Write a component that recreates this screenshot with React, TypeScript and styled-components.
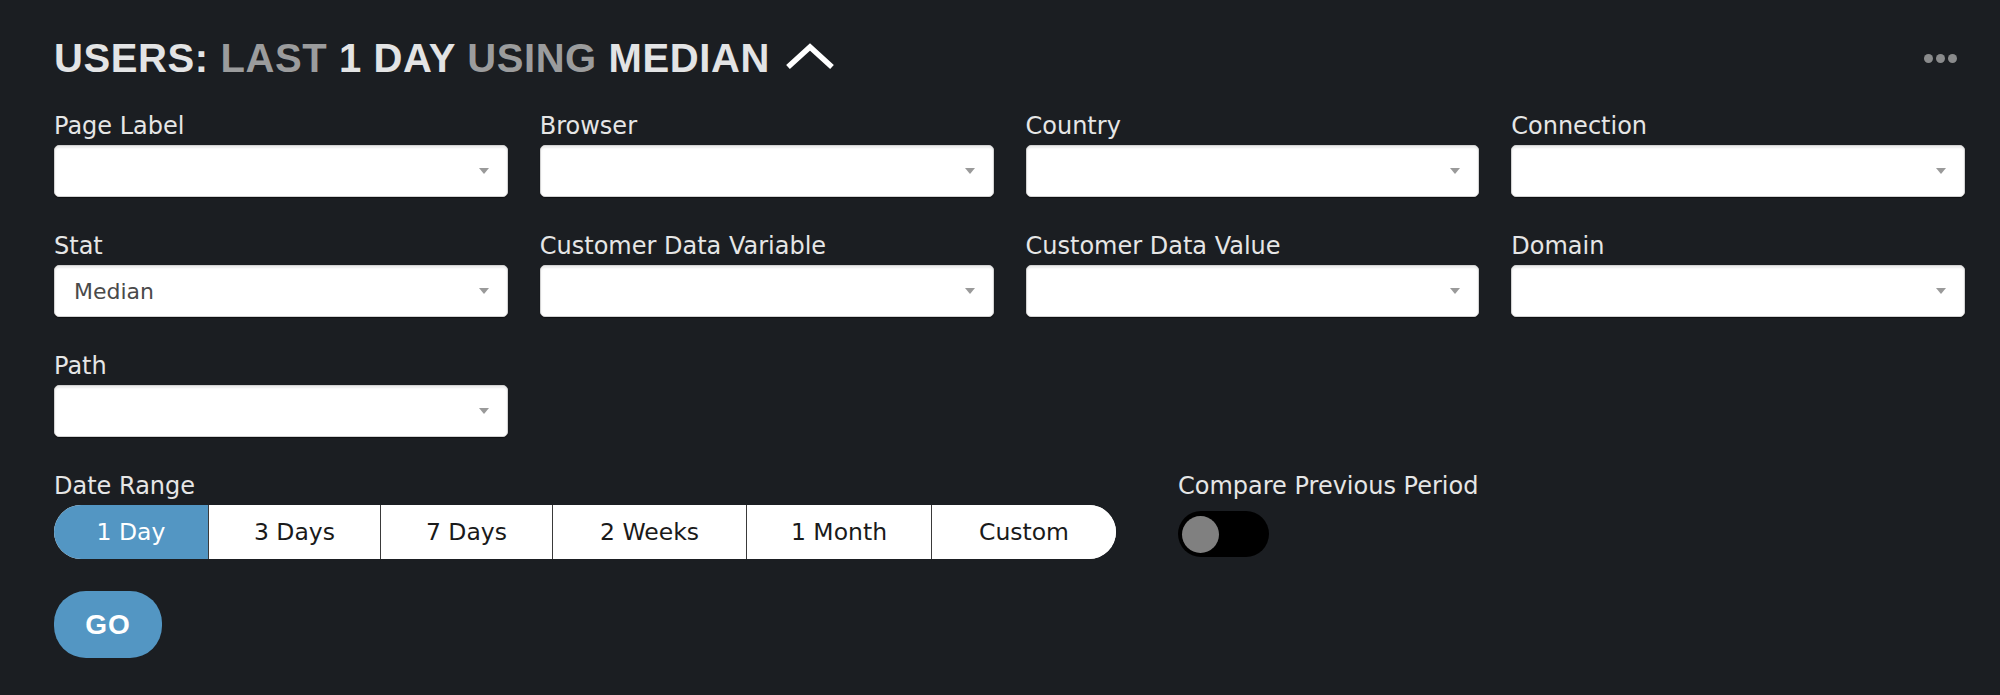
import styled, { createGlobalStyle } from "styled-components";

const GlobalStyle = createGlobalStyle`
  html, body {
    margin: 0;
    padding: 0;
    background: #1b1e22;
  }

  body {
    font-family: "DejaVu Sans", "Liberation Sans", sans-serif;
    color: #e6e6e6;
  }
`;

const StyledPanel = styled.section`
  min-height: 695px;
  box-sizing: border-box;
  padding: 34px 35px 0 54px;
`;

const Header = styled.header`
  display: flex;
  align-items: center;
  justify-content: space-between;
  height: 48px;
  padding-right: 8px;
  margin-bottom: 31px;
`;

const Title = styled.h1`
  display: flex;
  align-items: center;
  gap: 14px;
  margin: 0;
  font-family: "Liberation Sans", Arial, sans-serif;
  font-weight: 700;
  font-size: 40px;
  line-height: 48px;
  letter-spacing: 0.6px;
  color: #e3e4e5;
`;

const Muted = styled.span`
  color: #9b9c9d;
`;

const Chevron = styled.svg`
  width: 52px;
  height: 28px;
  margin-top: -4px;
`;

const MoreButton = styled.button`
  display: flex;
  gap: 3px;
  padding: 0;
  border: 0;
  background: none;
  cursor: pointer;

  span {
    width: 9px;
    height: 9px;
    border-radius: 50%;
    background: #8a8b8c;
  }
`;

const FilterGrid = styled.div`
  display: grid;
  grid-template-columns: repeat(4, 1fr);
  column-gap: 32px;
  row-gap: 36px;
`;

const Field = styled.div`
  display: flex;
  flex-direction: column;
`;

const Label = styled.label`
  font-size: 24px;
  line-height: 27px;
  height: 27px;
  margin-bottom: 5px;
  color: #e6e6e6;
  white-space: nowrap;
`;

const SelectBox = styled.div`
  position: relative;
  display: flex;
  align-items: center;
  box-sizing: border-box;
  height: 52px;
  padding: 0 40px 0 19px;
  background: #fff;
  border: 1px solid #d2d2d2;
  border-radius: 5px;
  box-shadow: inset 0 2px 2px rgba(0, 0, 0, 0.08), 0 1px 1px rgba(0, 0, 0, 0.5);
  font-size: 22px;
  color: #4a4a4a;

  &::after {
    content: "";
    position: absolute;
    right: 18px;
    top: 50%;
    margin-top: -3px;
    border-left: 5.5px solid transparent;
    border-right: 5.5px solid transparent;
    border-top: 6px solid #9a9a9a;
  }
`;

const DateRow = styled.div`
  display: flex;
  gap: 62px;
  margin-top: 36px;
`;

const Segmented = styled.div`
  display: flex;
  height: 54px;
  border-radius: 27px;
  overflow: hidden;
  background: #fff;
`;

const Segment = styled.button<{ $active?: boolean; $width: number }>`
  width: ${(p) => p.$width}px;
  padding: 0;
  border: 0;
  border-left: 1px solid #3a3a3a;
  background: ${(p) => (p.$active ? "#5396c3" : "#fff")};
  color: ${(p) => (p.$active ? "#fff" : "#1a1a1a")};
  font-family: "DejaVu Sans", sans-serif;
  font-size: 23.5px;
  white-space: nowrap;
  cursor: pointer;

  &:first-child {
    border-left: 0;
  }
`;

const Toggle = styled.div<{ $on?: boolean }>`
  display: flex;
  align-items: center;
  width: 91px;
  height: 46px;
  margin-top: 6px;
  padding: 0 4px;
  box-sizing: border-box;
  border-radius: 23px;
  background: #000;
  justify-content: ${(p) => (p.$on ? "flex-end" : "flex-start")};

  span {
    width: 37px;
    height: 37px;
    border-radius: 50%;
    background: #808080;
  }
`;

const GoButton = styled.button`
  margin-top: 32px;
  width: 108px;
  height: 67px;
  border: 0;
  border-radius: 32px;
  background: #5396c3;
  color: #fff;
  font-family: "Liberation Sans", Arial, sans-serif;
  font-weight: 700;
  font-size: 28px;
  letter-spacing: 1px;
  cursor: pointer;
`;

const filters = [
  { label: "Page Label" },
  { label: "Browser" },
  { label: "Country" },
  { label: "Connection" },
  { label: "Stat", value: "Median" },
  { label: "Customer Data Variable" },
  { label: "Customer Data Value" },
  { label: "Domain" },
  { label: "Path" },
];

const ranges = [
  { label: "1 Day", width: 154 },
  { label: "3 Days", width: 172 },
  { label: "7 Days", width: 172 },
  { label: "2 Weeks", width: 194 },
  { label: "1 Month", width: 185 },
  { label: "Custom", width: 185 },
];

const App = () => {
  return (
    <>
      <GlobalStyle />
      <StyledPanel>
        <Header>
          <Title>
            <span>
              USERS: <Muted>LAST</Muted> 1 DAY <Muted>USING</Muted> MEDIAN
            </span>
            <Chevron viewBox="0 0 52 28">
              <polyline
                points="4,25 26,5 48,25"
                fill="none"
                stroke="#fff"
                strokeWidth="5.5"
              />
            </Chevron>
          </Title>
          <MoreButton aria-label="more">
            <span />
            <span />
            <span />
          </MoreButton>
        </Header>

        <FilterGrid>
          {filters.map((f) => (
            <Field key={f.label}>
              <Label>{f.label}</Label>
              <SelectBox>{f.value}</SelectBox>
            </Field>
          ))}
        </FilterGrid>

        <DateRow>
          <Field>
            <Label>Date Range</Label>
            <Segmented>
              {ranges.map((r, i) => (
                <Segment key={r.label} $active={i === 0} $width={r.width}>
                  {r.label}
                </Segment>
              ))}
            </Segmented>
          </Field>
          <Field>
            <Label>Compare Previous Period</Label>
            <Toggle>
              <span />
            </Toggle>
          </Field>
        </DateRow>

        <GoButton>GO</GoButton>
      </StyledPanel>
    </>
  );
};

export default App;
